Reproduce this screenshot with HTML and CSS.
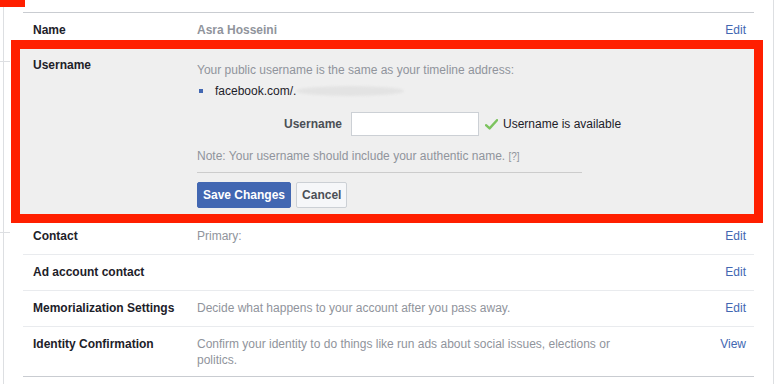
FILE: index.html
```html
<!DOCTYPE html>
<html lang="en">
<head>
    <meta charset="UTF-8">
    <title>General Account Settings</title>
    <link rel="stylesheet" href="styles.css">
</head>
<body>
<div class="page">
    <div class="marker"></div>
    <div class="tick tick-top"></div>
    <div class="tick tick-bottom"></div>

    <div class="panel">
        <ul class="settings">
            <li class="row">
                <div class="label">Name</div>
                <div class="content strong">Asra Hosseini</div>
                <a class="action" href="#">Edit</a>
            </li>

            <li class="row row-open">
                <div class="label">Username</div>
                <div class="editor">
                    <p class="hint">Your public username is the same as your timeline address:</p>
                    <div class="address">
                        <span class="bullet"></span>
                        <span class="url">facebook.com/.</span><span class="blurred"></span>
                    </div>
                    <div class="field">
                        <label for="username">Username</label>
                        <input type="text" id="username">
                        <svg class="check" width="13" height="11" viewBox="0 0 13 11">
                            <path d="M1 6.2 L4.6 9.4 L12 1.2" fill="none" stroke="#7cc35e" stroke-width="2.4" stroke-linecap="round" stroke-linejoin="round"/>
                        </svg>
                        <span class="status">Username is available</span>
                    </div>
                    <p class="hint note">Note: Your username should include your authentic name. <span class="help">[?]</span></p>
                    <div class="buttons">
                        <button class="btn btn-primary">Save Changes</button>
                        <button class="btn">Cancel</button>
                    </div>
                </div>
            </li>

            <li class="row">
                <div class="label">Contact</div>
                <div class="content">Primary:</div>
                <a class="action" href="#">Edit</a>
            </li>
            <li class="row">
                <div class="label">Ad account contact</div>
                <div class="content"></div>
                <a class="action" href="#">Edit</a>
            </li>
            <li class="row">
                <div class="label">Memorialization Settings</div>
                <div class="content">Decide what happens to your account after you pass away.</div>
                <a class="action" href="#">Edit</a>
            </li>
            <li class="row row-last">
                <div class="label">Identity Confirmation</div>
                <div class="content">Confirm your identity to do things like run ads about social issues, elections or politics.</div>
                <a class="action" href="#">View</a>
            </li>
        </ul>
    </div>

    <div class="highlight"></div>
</div>
</body>
</html>
```

FILE: styles.css
```css
:root {
    --text-dark: #1d2129;
    --text-grey: #90949c;
    --link: #4267b2;
    --line: #e9ebee;
    --line-dark: #c9ccd1;
    --edit-bg: #efefef;
    --mark-red: #ff1f00;
}

* {
    box-sizing: border-box;
    margin: 0;
    padding: 0;
}

body {
    font-family: "Liberation Sans", Arial, sans-serif;
    font-size: 12px;
    line-height: 16px;
    color: var(--text-dark);
    background: #ffffff;
}

.page {
    position: relative;
    width: 784px;
    height: 384px;
    overflow: hidden;
}

/* annotation leftovers from the screenshot */
.marker {
    position: absolute;
    left: 0;
    top: 0;
    width: 25px;
    height: 7px;
    background: var(--mark-red);
}

.tick {
    position: absolute;
    left: 0;
    width: 10px;
    height: 1px;
    background: #dddfe2;
}

.tick-top { top: 61px; }
.tick-bottom { top: 232px; }

.highlight {
    position: absolute;
    left: 11px;
    top: 40px;
    width: 752px;
    height: 183px;
    border: 9px solid var(--mark-red);
}

.panel {
    margin-left: 3px;
    width: 771px;
    height: 384px;
    border-left: 1px solid #dddfe2;
    border-right: 1px solid #dddfe2;
    padding: 12px 19px 0;
}

.settings {
    list-style: none;
    border-top: 1px solid var(--line-dark);
    border-bottom: 1px solid var(--line-dark);
}

.row {
    display: grid;
    grid-template-columns: 164px 1fr auto;
    padding: 9px 8px 10px 10px;
    border-top: 1px solid var(--line);
}

.row:first-child {
    border-top: none;
    padding-bottom: 9px;
}

.row-last {
    padding-bottom: 8px;
}

.label {
    font-weight: bold;
    color: var(--text-dark);
}

.content {
    color: var(--text-grey);
    max-width: 440px;
}

.content.strong {
    font-weight: bold;
}

.action {
    color: var(--link);
    text-decoration: none;
}

.row-open {
    margin-left: -3px;
    padding: 9px 8px 10px 13px;
    background: var(--edit-bg);
    border-top: 1px solid #dddfe2;
    grid-template-columns: 164px 1fr;
}

.editor {
    padding-top: 5px;
}

.hint {
    color: var(--text-grey);
}

.address {
    display: flex;
    align-items: center;
    margin-top: 5px;
}

.bullet {
    width: 4px;
    height: 4px;
    margin: 0 12px 0 2px;
    background: var(--link);
}

.blurred {
    display: inline-block;
    width: 108px;
    height: 10px;
    border-radius: 50%;
    background: #e3e3e3;
    filter: blur(1px);
}

.field {
    display: flex;
    align-items: center;
    margin-top: 13px;
}

.field label {
    width: 145px;
    margin-right: 9px;
    text-align: right;
    font-weight: bold;
    color: #4b4f56;
}

.field input {
    width: 128px;
    height: 24px;
    border: 1px solid #ccd0d5;
    background: #ffffff;
    font: inherit;
    padding: 0 4px;
}

.check {
    margin: 0 5px 0 6px;
}

.status {
    color: var(--text-dark);
}

.note {
    margin-top: 12px;
    padding-bottom: 7px;
    width: 385px;
    border-bottom: 1px solid #cccccc;
}

.help {
    font-size: 10px;
}

.buttons {
    display: flex;
    gap: 5px;
    margin-top: 9px;
}

.btn {
    height: 26px;
    padding: 0 5px;
    border: 1px solid #ccd0d5;
    border-radius: 2px;
    background: #f6f7f9;
    color: #4b4f56;
    font: bold 12px "Liberation Sans", Arial, sans-serif;
}

.btn-primary {
    background: var(--link);
    border-color: var(--link);
    color: #ffffff;
}
```
